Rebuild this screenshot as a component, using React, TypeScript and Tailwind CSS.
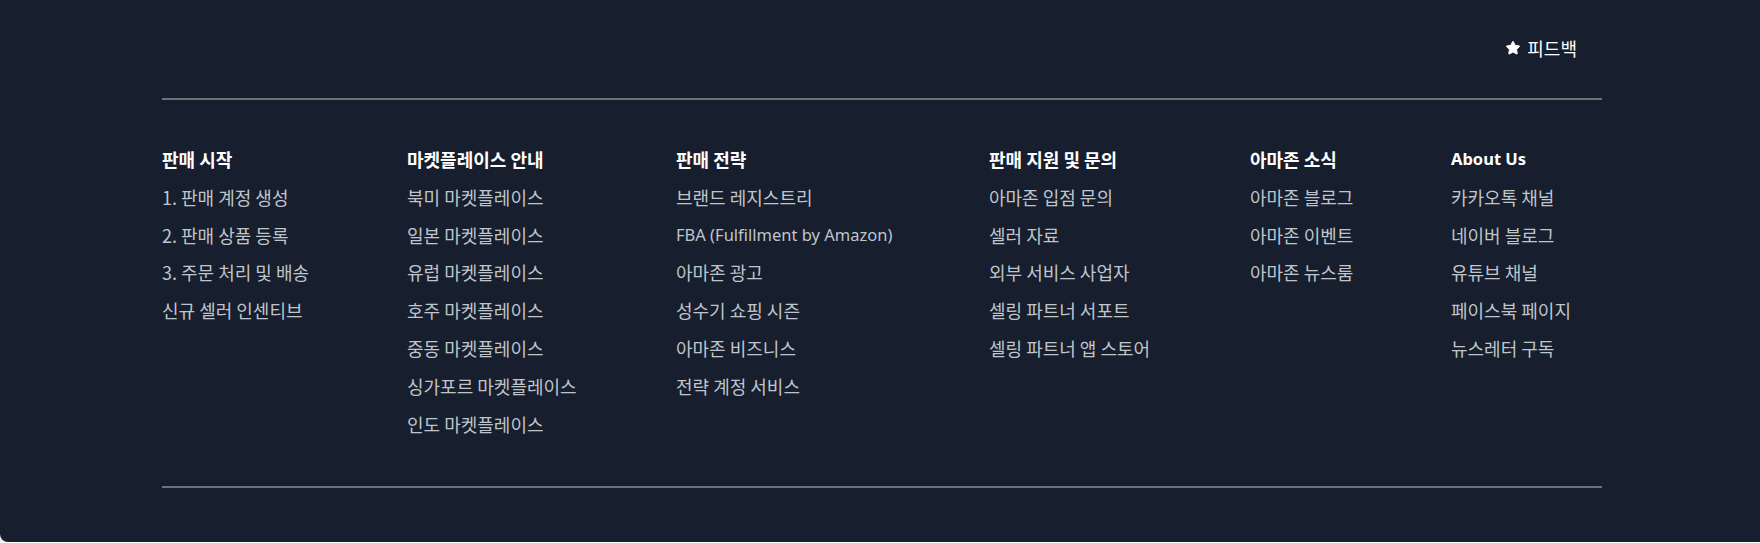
import { Star } from 'lucide-react';

const columns = [
  {
    title: '판매 시작',
    width: 'w-[245px]',
    links: ['1. 판매 계정 생성', '2. 판매 상품 등록', '3. 주문 처리 및 배송', '신규 셀러 인센티브'],
  },
  {
    title: '마켓플레이스 안내',
    width: 'w-[269px]',
    links: [
      '북미 마켓플레이스',
      '일본 마켓플레이스',
      '유럽 마켓플레이스',
      '호주 마켓플레이스',
      '중동 마켓플레이스',
      '싱가포르 마켓플레이스',
      '인도 마켓플레이스',
    ],
  },
  {
    title: '판매 전략',
    width: 'w-[313px]',
    links: [
      '브랜드 레지스트리',
      'FBA (Fulfillment by Amazon)',
      '아마존 광고',
      '성수기 쇼핑 시즌',
      '아마존 비즈니스',
      '전략 계정 서비스',
    ],
  },
  {
    title: '판매 지원 및 문의',
    width: 'w-[261px]',
    links: ['아마존 입점 문의', '셀러 자료', '외부 서비스 사업자', '셀링 파트너 서포트', '셀링 파트너 앱 스토어'],
  },
  {
    title: '아마존 소식',
    width: 'w-[201px]',
    links: ['아마존 블로그', '아마존 이벤트', '아마존 뉴스룸'],
  },
  {
    title: 'About Us',
    width: 'flex-1',
    links: ['카카오톡 채널', '네이버 블로그', '유튜브 채널', '페이스북 페이지', '뉴스레터 구독'],
  },
];

// latin-only labels read a bit narrower in the original, so they get their own face
const isLatin = (s: string) => /^[\x00-\x7F]+$/.test(s);
const latin = "font-['Noto_Sans',sans-serif] text-[16.5px]";

export default function App() {
  return (
    <div className="bg-[#eeeeee]">
      <footer className="bg-[#171e2d] rounded-bl-[8px] font-['Noto_Sans_CJK_KR',sans-serif] text-[18px] pt-[36px] pb-[54px]">
        <div className="ml-[162px] w-[1440px]">
          <div className="flex justify-end pr-[25px]">
            <button className="flex items-center gap-[6px] leading-6 text-white">
              <Star size={16} fill="white" strokeWidth={1.5} className="text-white" />
              피드백
            </button>
          </div>

          <div className="mt-[38px] border-t-2 border-[#6b7475]" />

          <div className="flex pt-[47px] pb-[50px]">
            {columns.map((col) => (
              <div key={col.title} className={`${col.width} flex flex-col gap-[13.8px]`}>
                <h3 className={`leading-6 font-bold text-white whitespace-nowrap ${isLatin(col.title) ? latin : ''}`}>
                  {col.title}
                </h3>
                {col.links.map((link) => (
                  <a
                    key={link}
                    href="#"
                    className={`leading-6 text-[#bfc5cb] whitespace-nowrap ${isLatin(link) ? latin : ''}`}
                  >
                    {link}
                  </a>
                ))}
              </div>
            ))}
          </div>

          <div className="border-t-2 border-[#6b7475]" />
        </div>
      </footer>
    </div>
  );
}
